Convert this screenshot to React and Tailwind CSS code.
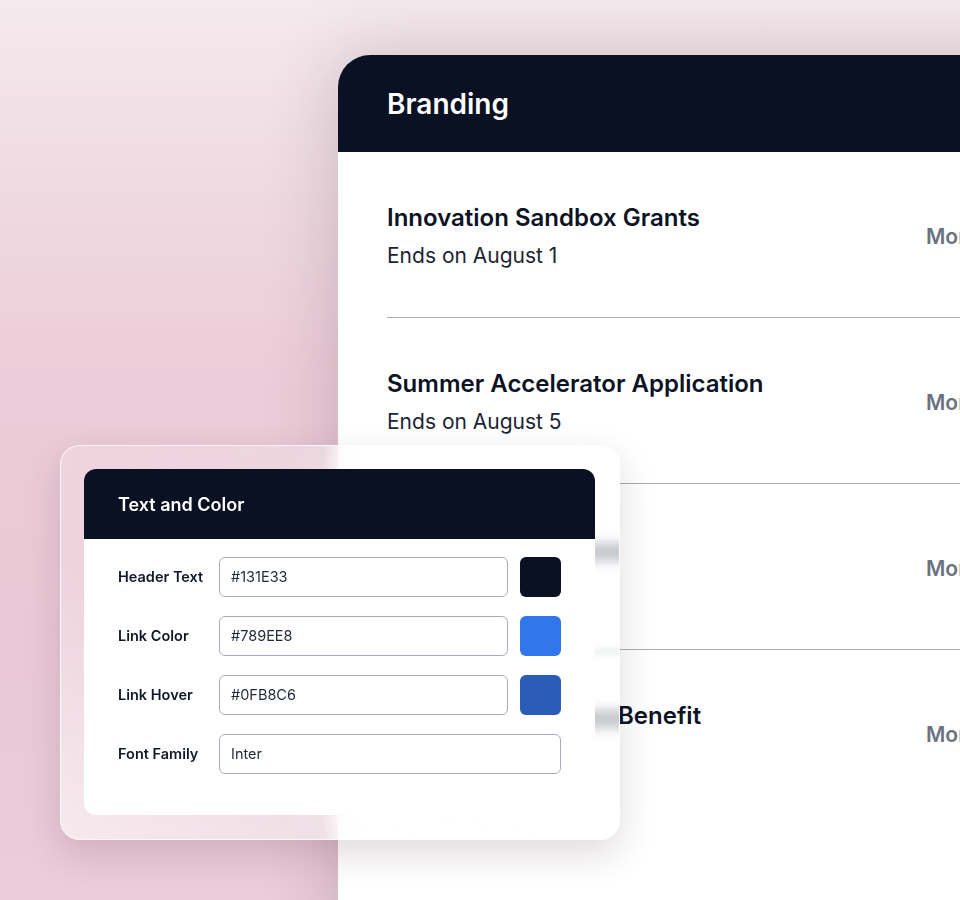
import React from "react";

const GRANTS = [
  { title: "Innovation Sandbox Grants", ends: "Ends on August 1" },
  { title: "Summer Accelerator Application", ends: "Ends on August 5" },
  { title: "Founder Fellowship", ends: "Ends on August 9" },
  { title: "Employee Wellness Benefit", ends: "Ends on August 12" },
];

const FIELDS = [
  { label: "Header Text", value: "#131E33", swatch: "bg-[#0a1122]" },
  { label: "Link Color", value: "#789EE8", swatch: "bg-[#3176ea]" },
  { label: "Link Hover", value: "#0FB8C6", swatch: "bg-[#2a5db6]" },
  { label: "Font Family", value: "Inter" },
];

function GrantRow({ title, ends, last }) {
  return (
    <div className={`flex items-center pt-[52px] pb-[47px] ${last ? "" : "border-b-[1.5px] border-[#a9adb4]"}`}>
      <div className="w-[539px] shrink-0">
        <div className="text-[24px] leading-[28px] font-semibold text-[#0b1324]">{title}</div>
        <div className="mt-[10px] text-[21px] leading-[28px] text-[#1c2433]">{ends}</div>
      </div>
      <div className="text-[21px] font-semibold text-[#6b7280] whitespace-nowrap">More</div>
    </div>
  );
}

function TextColorPanel() {
  return (
    <div className="absolute left-[60px] top-[445px] w-[560px] h-[395px] p-[23px] pr-[24px] rounded-[20px] overflow-hidden backdrop-blur-2xl border border-white/80 shadow-[0_14px_36px_rgba(60,30,50,0.16)] bg-[linear-gradient(30deg,rgba(255,255,255,0.5)_0%,rgba(255,255,255,0)_40%),linear-gradient(90deg,rgba(255,255,255,0.18)_0px,rgba(255,255,255,0.22)_262px,rgba(255,255,255,0.85)_282px,#ffffff_300px)]">
      {/* blurred glimpses of the list titles behind the glass */}
      <div className="absolute left-[520px] top-[97px] w-[60px] h-[18px] rounded-full bg-[#b4b7bd] opacity-80 blur-[6px]" />
      <div className="absolute left-[520px] top-[264px] w-[60px] h-[18px] rounded-full bg-[#b4b7bd] opacity-80 blur-[6px]" />
      <div className="absolute left-[520px] top-[204px] w-[60px] h-[3px] bg-[#dcdee1] blur-[3px]" />
      <div className="relative z-10 rounded-[12px] overflow-hidden bg-white">
        <div className="h-[70px] px-[34px] flex items-center bg-[#0a1122] text-white text-[18px] font-semibold">
          Text and Color
        </div>
        <div className="px-[34px] pt-[18px] pb-[41px] flex flex-col gap-[19px]">
          {FIELDS.map((f) => (
            <div key={f.label} className="flex items-center">
              <div className="w-[101px] shrink-0 text-[14.5px] font-semibold text-[#111827]">{f.label}</div>
              <div
                className={`h-[40px] px-[11px] flex items-center rounded-[6px] border-[1.5px] border-[#a7abbb] text-[14.5px] text-[#1f2937] ${
                  f.swatch ? "w-[289px]" : "w-[342px]"
                }`}
              >
                {f.value}
              </div>
              {f.swatch && <div className={`ml-[12px] w-[41px] h-[40px] rounded-[6px] ${f.swatch}`} />}
            </div>
          ))}
        </div>
      </div>
    </div>
  );
}

export default function App() {
  return (
    <div
      className="relative w-[960px] h-[900px] overflow-hidden pl-[338px] pt-[55px] bg-[linear-gradient(180deg,#f4eaed_0%,#efd9e1_22%,#ecccd8_42%,#eac8d5_70%,#ebccd9_100%)]"
      style={{ fontFamily: "Inter, 'Noto Sans', sans-serif" }}
    >
      <div className="w-[720px] h-[900px] rounded-tl-[32px] bg-white shadow-[0_0_70px_rgba(70,50,65,0.22)] overflow-hidden">
        <div className="h-[97px] px-[49px] flex items-center bg-[#0a1122] text-white text-[28px] font-semibold">
          Branding
        </div>
        <div className="pl-[49px]">
          {GRANTS.map((g, i) => (
            <GrantRow key={g.title} {...g} last={i === GRANTS.length - 1} />
          ))}
        </div>
      </div>
      <TextColorPanel />
    </div>
  );
}
